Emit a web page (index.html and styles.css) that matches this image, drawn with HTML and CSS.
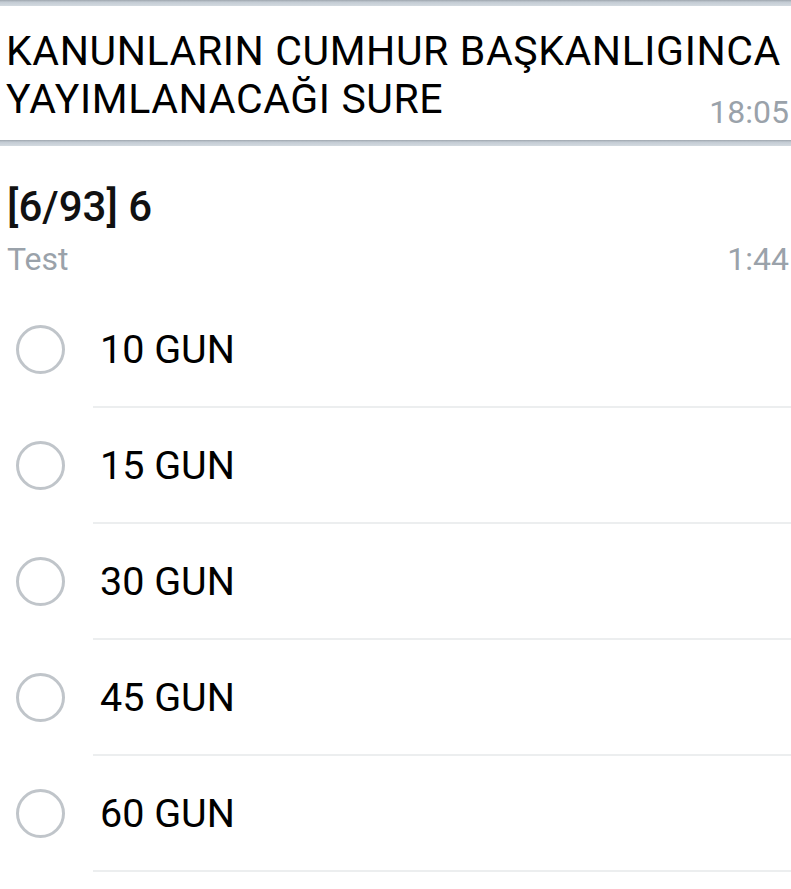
FILE: index.html
```html
<!DOCTYPE html>
<html lang="tr">
<head>
  <meta charset="UTF-8">
  <title>Anket</title>
  <link rel="stylesheet" href="styles.css">
</head>
<body>
  <div class="bubbleEdge"></div>

  <!-- Mesaj -->
  <div class="message">
    <div class="messageText">KANUNLARIN CUMHUR BAŞKANLIGINCA<br>YAYIMLANACAĞI SURE</div>
    <div class="messageTime">18:05</div>
  </div>

  <div class="bubbleEdge"></div>

  <!-- Anket -->
  <div class="poll">
    <div class="pollQuestion">[6/93] 6</div>
    <div class="pollMeta">
      <span>Test</span>
      <span>1:44</span>
    </div>

    <ul class="pollOptions">
      <li class="pollOption"><span class="radio"></span><span class="optionText">10 GUN</span></li>
      <li class="pollOption"><span class="radio"></span><span class="optionText">15 GUN</span></li>
      <li class="pollOption"><span class="radio"></span><span class="optionText">30 GUN</span></li>
      <li class="pollOption"><span class="radio"></span><span class="optionText">45 GUN</span></li>
      <li class="pollOption"><span class="radio"></span><span class="optionText">60 GUN</span></li>
    </ul>
  </div>
</body>
</html>
```

FILE: styles.css
```css
html, body {
  margin: 0;
  height: 100%;
  overflow: hidden;
  background-color: #ffffff;
  font-family: Roboto, "Noto Sans", sans-serif;
  color: #000000;
}

.bubbleEdge {
  height: 6px;
  background: linear-gradient(#9ea6ae, #c3cbd3 35%, #d3dae0);
}

.message {
  height: 134px;
  padding: 0 2px 0 6px;
  position: relative;
}

.messageText {
  padding-top: 21px;
  font-size: 41px;
  letter-spacing: 0.6px;
  line-height: 48px;
}

.messageTime {
  position: absolute;
  right: 2px;
  bottom: 9px;
  font-size: 32px;
  color: #9aa2aa;
}

.poll {
  padding: 0 2px 0 7px;
}

.pollQuestion {
  margin-top: 37px;
  font-size: 42px;
  font-weight: 500;
  line-height: 48px;
  color: #111111;
}

.pollMeta {
  display: flex;
  justify-content: space-between;
  margin-top: 8px;
  font-size: 32px;
  line-height: 40px;
  color: #9aa2aa;
}

.pollOptions {
  list-style: none;
  margin: 13px 0 0 -7px;
  padding: 0;
}

.pollOption {
  display: flex;
  align-items: center;
  height: 114px;
  border-bottom: 2px solid #eceeef;
  margin-left: 93px;
  margin-right: -2px;
  position: relative;
}

.radio {
  position: absolute;
  left: -77px;
  width: 43px;
  height: 43px;
  border: 3px solid #c0c5ca;
  border-radius: 50%;
}

.optionText {
  margin-left: 7px;
  font-size: 39.5px;
}
```
